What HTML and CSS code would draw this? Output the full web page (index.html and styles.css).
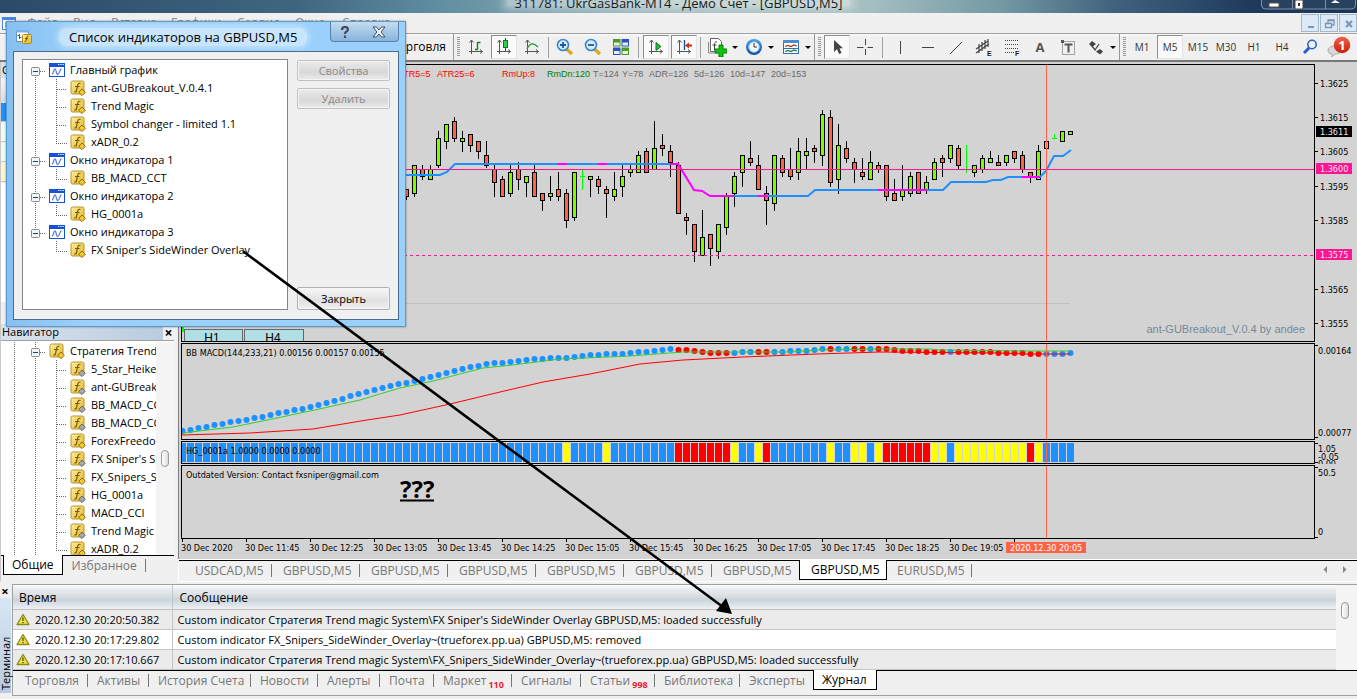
FILE: index.html
```html
<!DOCTYPE html>
<html lang="ru">
<head>
<meta charset="utf-8">
<title>311781: UkrGasBank-MT4 - Демо Счет - [GBPUSD,M5]</title>
<link rel="stylesheet" href="styles.css">
</head>
<body>
<svg class="defs" aria-hidden="true">
  <defs>
    <linearGradient id="gold" x1="0" y1="0" x2="1" y2="1"><stop offset="0" stop-color="#fff0a0"/><stop offset="1" stop-color="#e0b428"/></linearGradient>
    <linearGradient id="clockface" x1="0" y1="0" x2="0" y2="1"><stop offset="0" stop-color="#4aa0f0"/><stop offset="1" stop-color="#0a4f9c"/></linearGradient>
    <linearGradient id="badge" x1="0" y1="0" x2="0" y2="1"><stop offset="0" stop-color="#f4604a"/><stop offset="1" stop-color="#c8200c"/></linearGradient>
  </defs>
  <symbol id="i-func" viewBox="0 0 16 16"><rect x="1" y="1" width="13" height="13" rx="1.500" fill="url(#gold)" stroke="#b8952c"/><path d="M10.500 3.500c-2-.8-2.600.5-3 2.500l-1 4.500c-.3 1.500-1 1.800-2.200 1.300M5 6.500h4.500" fill="none" stroke="#7a5a08" stroke-width="1.200"/><path d="M12 9l3.300 3.300L12 15.600 8.700 12.300z" fill="#f4c830" stroke="#8f6d10"/></symbol>
  <symbol id="i-funcg" viewBox="0 0 16 16"><rect x="1" y="1" width="13" height="13" rx="1.500" fill="url(#gold)" stroke="#b8952c"/><path d="M10.500 3.500c-2-.8-2.600.5-3 2.500l-1 4.500c-.3 1.500-1 1.800-2.200 1.300M5 6.500h4.500" fill="none" stroke="#7a5a08" stroke-width="1.200"/><path d="M12 9l3.300 3.300L12 15.600 8.700 12.300z" fill="#a8a8a8" stroke="#686868"/></symbol>
  <symbol id="i-win" viewBox="0 0 16 16"><rect x=".5" y="1.500" width="15" height="13" fill="#fff" stroke="#1450d8"/><path d="M0 1h16v4H0z" fill="#1450d8"/><path d="M9 2.500h1.300M11.300 2.500h1.300M13.500 2.500h1.300" stroke="#fff" stroke-width="1.200"/><path d="M3 12c1.500 0 1.500-5 3-5s1 5.500 2.800 5.500S10.500 7 12.500 7" fill="none" stroke="#5a80e0" stroke-width="1.300"/></symbol>
  <symbol id="g-vert" viewBox="0 0 21 18"><path d="M10.500 0v18" stroke="#666" stroke-dasharray="1 1"/></symbol>
  <symbol id="g-none" viewBox="0 0 21 18"></symbol>
  <symbol id="g-tee" viewBox="0 0 21 18"><path d="M10.500 0v18M11 10.500h10" stroke="#666" stroke-dasharray="1 1"/></symbol>
  <symbol id="g-end" viewBox="0 0 21 18"><path d="M10.500 0v10M10 10.500h11" stroke="#666" stroke-dasharray="1 1"/></symbol>
  <symbol id="g-first" viewBox="0 0 21 18"><path d="M10.500 14v4M15 10.500h6" stroke="#666" stroke-dasharray="1 1"/><rect x="6.500" y="6.500" width="8" height="8" rx="1" fill="#f4f4f4" stroke="#8a8a8a"/><path d="M8 10.500h5" stroke="#1a3ab0"/></symbol>
  <symbol id="g-box" viewBox="0 0 21 18"><path d="M10.500 0v18M15 10.500h6" stroke="#666" stroke-dasharray="1 1"/><rect x="6.500" y="6.500" width="8" height="8" rx="1" fill="#f4f4f4" stroke="#8a8a8a"/><path d="M8 10.500h5" stroke="#1a3ab0"/></symbol>
  <symbol id="g-last" viewBox="0 0 21 18"><path d="M10.500 0v6M15 10.500h6" stroke="#666" stroke-dasharray="1 1"/><rect x="6.500" y="6.500" width="8" height="8" rx="1" fill="#f4f4f4" stroke="#8a8a8a"/><path d="M8 10.500h5" stroke="#1a3ab0"/></symbol>
  <symbol id="i-warn" viewBox="0 0 14 13"><path d="M7 1.500L13 11.500H1z" fill="#f0e040" stroke="#8a8a20" stroke-width="1.300" stroke-linejoin="round"/><path d="M7 4.500v3.500M7 9v1.300" stroke="#555510" stroke-width="1.300"/></symbol>
  <symbol id="axes" viewBox="0 0 18 18"><path d="M4.500 2v14M2 13.500h13M2.500 4.500l2-2.500 2 2.500M13 11.500l2.500 2-2.500 2" fill="none" stroke="#555"/></symbol>
</svg>

<div class="app">
  <header class="titlebar">
    <h1>311781: UkrGasBank-MT4 - Демо Счет - [GBPUSD,M5]</h1>
    <div class="winctl"><svg width="96" height="10" viewBox="0 0 96 10"><path d="M.5 0v5q0 4 4 4h86q4 0 4-4V0" fill="#27415f" stroke="#7d93aa"/><path d="M31.500 0v9M64.500 0v9" stroke="#7d93aa"/><rect x="8" y="3" width="10" height="4" fill="#fff" stroke="#555"/><path d="M34 0h8v9h-8z" fill="#fff" stroke="#444"/><path d="M37 3h2v3h-2z" fill="#333"/><path d="M70 3l4-3 5 3z" fill="#fff"/></svg></div>
  </header>

  <nav class="menubar">
    <svg class="appicon" width="14" height="14" viewBox="0 0 14 14"><rect x=".5" y="1.500" width="13" height="12" fill="#fff" stroke="#4a86e0"/><path d="M0 1h14v3H0z" fill="#4a86e0"/><path d="M4 6v6M7 5v5M10 7v4" stroke="#3a78c0"/></svg>
    <a href="#">Файл</a><a href="#">Вид</a><a href="#">Вставка</a><a href="#">Графики</a><a href="#">Сервис</a><a href="#">Окно</a><a href="#">Справка</a>
    <div class="mdi">
      <button aria-label="Свернуть"><svg width="17" height="17"><path d="M6 12h6" stroke="#7a96b4" stroke-width="2"/></svg></button>
      <button aria-label="Восстановить"><svg width="17" height="17"><path d="M7 8V5h6v5h-2M4.500 8.500h6v4h-6zM7 5.500h6" fill="none" stroke="#7a96b4" stroke-width="1.300"/></svg></button>
      <button aria-label="Закрыть окно"><svg width="17" height="17"><path d="M6 6l6 6M12 6l-6 6" stroke="#7a96b4" stroke-width="2.200"/></svg></button>
    </div>
  </nav>

  <div class="toolbar">
    <div class="autotrade">Автоторговля</div>
    <i class="grip"></i>
    <button class="tb" aria-label="Бары"><svg width="18" height="18"><use href="#axes"/><path d="M10.500 4v8M10.500 4.500h3M8 11.500h2.500" stroke="#0a8a0a" fill="none" stroke-width="1.400"/></svg></button>
    <button class="tb on" aria-label="Свечи"><svg width="18" height="18"><use href="#axes"/><path d="M10.500 0v13" stroke="#0a6a0a"/><rect x="8.500" y="2.500" width="4" height="7" fill="#2ed050" stroke="#0a7a1a"/></svg></button>
    <button class="tb" aria-label="Линия"><svg width="18" height="18"><use href="#axes"/><path d="M4 11c3-6 6-7 11-2" stroke="#2a9a3a" fill="none" stroke-width="1.300"/></svg></button>
    <i class="sep"></i>
    <button class="tb" aria-label="Увеличить"><svg width="18" height="18"><path d="M10.500 11l5.500 5" stroke="#d8a820" stroke-width="3.400"/><circle cx="7" cy="7" r="5.500" fill="#d4ecfc" stroke="#3a84c8" stroke-width="1.600"/><path d="M4 7h6M7 4v6" stroke="#1a5a9a" stroke-width="1.800"/></svg></button>
    <button class="tb" aria-label="Уменьшить"><svg width="18" height="18"><path d="M10.500 11l5.500 5" stroke="#d8a820" stroke-width="3.400"/><circle cx="7" cy="7" r="5.500" fill="#d4ecfc" stroke="#3a84c8" stroke-width="1.600"/><path d="M4 7h6" stroke="#1a5a9a" stroke-width="1.800"/></svg></button>
    <button class="tb" aria-label="Плитка"><svg width="18" height="18"><path d="M1 1h7.500v7.500H1zM9.500 9.500H17V17H9.500z" fill="#4a9a20"/><path d="M9.500 1H17v7.500H9.500zM1 9.500h7.500V17H1z" fill="#2a50c8"/><path d="M2 4.500h5.500v3H2zM10.500 4.500H16v3h-5.500zM2 13h5.500v3H2zM10.500 13H16v3h-5.500z" fill="#e8f0e8"/></svg></button>
    <i class="sep wide"></i>
    <button class="tb on" aria-label="Автопрокрутка"><svg width="18" height="18"><use href="#axes"/><path d="M9 4.500l5 4-5 4z" fill="#2ab840" stroke="#0a7a1a"/></svg></button>
    <button class="tb on" aria-label="Сдвиг графика"><svg width="18" height="18"><use href="#axes"/><path d="M9.500 2v10" stroke="#1a4a8a" stroke-width="1.300"/><path d="M10 7.500l4-3v2h3v2h-3v2z" fill="#c83010"/></svg></button>
    <i class="sep"></i>
    <button class="tb dd" aria-label="Индикаторы"><svg width="20" height="20"><path d="M3.500 1.500h8l3 3v10h-11z" fill="#fff" stroke="#666"/><path d="M10 5c-2-.6-2.500 1-2.500 3v5M5.500 8h4" stroke="#444" fill="none"/><path d="M1.500 5v11h9" fill="none" stroke="#888"/><path d="M12 8h4v4h4v4h-4v4h-4v-4H8v-4h4z" fill="#12c412" stroke="#0a7a0a"/></svg><b></b></button>
    <button class="tb dd" aria-label="Периоды"><svg width="18" height="18"><circle cx="9" cy="9" r="8" fill="url(#clockface)"/><circle cx="9" cy="9" r="5.300" fill="#f4f8fc" stroke="#8ab8e0"/><path d="M9 5v4h3" stroke="#333" fill="none"/></svg><b></b></button>
    <button class="tb dd" aria-label="Шаблоны"><svg width="18" height="18"><rect x="1.500" y="2.500" width="15" height="13" fill="#fff" stroke="#2a70c0"/><path d="M1 2h16v3H1z" fill="#4a8ed8"/><path d="M3 8.500l3-1 3 1 3-1.500 3 1" stroke="#a03818" fill="none" stroke-width="1.300"/><path d="M1 10.500h16" stroke="#2a70c0"/><path d="M3 13.500l3-1 3 1 3-1.500 3 1" stroke="#1a7a1a" fill="none" stroke-width="1.300"/></svg><b></b></button>
    <i class="grip"></i>
    <button class="tb on" aria-label="Курсор"><svg width="18" height="18"><path d="M6 2v12l3-3 2 5 2.500-1-2-4.700H15z" fill="#444"/></svg></button>
    <button class="tb" aria-label="Перекрестие"><svg width="18" height="18"><path d="M9.500 1v6M9.500 11v6M1 9.500h6.500M11.500 9.500H17" stroke="#444"/></svg></button>
    <i class="sep wide"></i>
    <button class="tb" aria-label="Вертикальная линия"><svg width="18" height="18"><path d="M9.500 3v13" stroke="#444" stroke-width="1"/></svg></button>
    <button class="tb" aria-label="Горизонтальная линия"><svg width="18" height="18"><path d="M3 9.500h12" stroke="#444"/></svg></button>
    <button class="tb" aria-label="Трендовая линия"><svg width="18" height="18"><path d="M3 16L15 4" stroke="#444"/></svg></button>
    <button class="tb" aria-label="Канал"><svg width="18" height="18"><path d="M1 11L13 3M1 15L14 6M4 6v9M7 4v9M10 2v9M13 1v8" stroke="#444" stroke-width="1.200"/><text x="12" y="18" class="tiny">E</text></svg></button>
    <button class="tb" aria-label="Фибоначчи"><svg width="18" height="18"><path d="M2 2.500h14M2 6.500h14M2 10.500h14M2 14.500h9" stroke="#444" stroke-dasharray="1 1"/><text x="12" y="18" class="tiny">F</text></svg></button>
    <button class="tb letter">A</button>
    <button class="tb" aria-label="Текстовая метка"><svg width="18" height="18"><rect x="3.500" y="3.500" width="12" height="13" fill="none" stroke="#555" stroke-dasharray="1 1"/><path d="M5.500 6.500h8M9.500 6.500v8" stroke="#555" stroke-width="2"/><path d="M2 2h3v3H2z" fill="#555"/></svg></button>
    <button class="tb dd" aria-label="Стрелки"><svg width="18" height="18"><path d="M5 3l4 3-4 3-3-3zM13 11l3 2.500-3 3-4-3z" fill="#444"/><path d="M5 8l3 4 4-6" stroke="#444" fill="none" stroke-width="1.300"/></svg><b></b></button>
    <i class="grip"></i>
    <button class="tb">M1</button><button class="tb on">M5</button><button class="tb">M15</button><button class="tb">M30</button><button class="tb">H1</button><button class="tb">H4</button>
    <button class="tb" aria-label="Поиск"><svg width="18" height="18"><path d="M3 15l5-5" stroke="#2a5ac8" stroke-width="3"/><circle cx="11" cy="6.500" r="4.200" fill="#eef4ff" stroke="#2a60d0" stroke-width="1.600"/></svg></button>
    <button class="tb" aria-label="Сообщения: 1"><svg width="26" height="24"><path d="M3 15c0-4 10-6 13-2 1 4-2 6-6 6l-3 3v-3c-3 0-4-2-4-4z" fill="#d8d8dc" stroke="#aaa"/><circle cx="17" cy="10" r="8.300" fill="url(#badge)"/><text x="17" y="15" class="count">1</text></svg></button>
  </div>

  <div class="middle">
    <aside class="side">
      <section class="market">
        <h2>Обзор рынка: GBPUSD</h2>
        <div class="mhead"></div>
        <div class="mrow sel"></div><div class="mrow mint"></div><div class="mrow mint"></div><div class="mrow straw"></div>
        <div class="mrest"></div>
      </section>
      <section class="navigator">
        <header><h2>Навигатор</h2><button aria-label="Закрыть навигатор">×</button></header>
        <div class="navbody">
          <ul class="tree" id="nav-tree"></ul>
          <div class="track"><i></i></div>
        </div>
        <div class="sidetabs"><button class="cur">Общие</button><button>Избранное</button></div>
      </section>
    </aside>

    <main class="chart">
      <div class="panes">
        <svg class="pane" id="p-main"></svg><svg class="axis" id="a-main"></svg>
        <svg class="pane" id="p-macd"></svg><svg class="axis" id="a-macd"></svg>
        <svg class="pane" id="p-hg"></svg><svg class="axis" id="a-hg"></svg>
        <svg class="pane" id="p-fx"></svg><svg class="axis" id="a-fx"></svg>
        <svg class="time" id="a-time"></svg>
      </div>
      <div class="charttabs">
        <button>USDCAD,M5</button><button>GBPUSD,M5</button><button>GBPUSD,M5</button><button>GBPUSD,M5</button><button>GBPUSD,M5</button><button>GBPUSD,M5</button><button class="last">GBPUSD,M5</button><button class="cur">GBPUSD,M5</button><button>EURUSD,M5</button>
        <svg class="scroll" width="30" height="9"><path d="M6 1v7L2.500 4.500zM22 1v7l3.500-3.500z" fill="#888"/></svg>
      </div>
    </main>
  </div>

  <section class="terminal">
    <div class="tstrip"><button aria-label="Закрыть терминал">×</button><span>Терминал</span></div>
    <div class="tmain">
      <div class="logbox">
        <table class="log">
          <thead><tr><th class="when">Время</th><th>Сообщение</th></tr></thead>
          <tbody>
            <tr><td><svg width="14" height="13"><use href="#i-warn"/></svg>2020.12.30 20:20:50.382</td><td>Custom indicator Стратегия Trend magic System\FX Sniper's SideWinder Overlay GBPUSD,M5: loaded successfully</td></tr>
            <tr><td><svg width="14" height="13"><use href="#i-warn"/></svg>2020.12.30 20:17:29.802</td><td>Custom indicator FX_Snipers_SideWinder_Overlay~(trueforex.pp.ua) GBPUSD,M5: removed</td></tr>
            <tr><td><svg width="14" height="13"><use href="#i-warn"/></svg>2020.12.30 20:17:10.667</td><td>Custom indicator Стратегия Trend magic System\FX_Snipers_SideWinder_Overlay~(trueforex.pp.ua) GBPUSD,M5: loaded successfully</td></tr>
          </tbody>
        </table>
        <div class="track"><i></i></div>
      </div>
      <div class="termtabs">
        <button>Торговля</button><button>Активы</button><button>История Счета</button><button>Новости</button><button>Алерты</button><button>Почта</button><button>Маркет<sub>110</sub></button><button>Сигналы</button><button>Статьи<sub>998</sub></button><button>Библиотека</button><button class="last">Эксперты</button><button class="cur">Журнал</button>
      </div>
    </div>
  </section>
</div>

<div class="dialog" role="dialog" aria-labelledby="dlg-title">
  <header>
    <svg width="17" height="16" viewBox="0 0 17 16"><rect x=".5" y="1.500" width="12" height="11" fill="#fff" stroke="#6a94c0"/><path d="M0 1h13v2.500H0z" fill="#7ab0e8"/><path d="M3.500 5v5M1.500 6.500h2M3.500 8.500h2" stroke="#3a60a0"/><rect x="6.500" y="5.500" width="9" height="9" rx="1" fill="url(#gold)" stroke="#b88a10"/><path d="M12.500 7c-1.500-.4-1.500 1-2 3s-.7 3-2 2.600M9 9.500h3" stroke="#6a4c00" fill="none"/></svg>
    <h2 id="dlg-title">Список индикаторов на GBPUSD,M5</h2>
    <div class="dctl"><button aria-label="Справка"><svg width="12" height="12"><path d="M3 4c0-4 6-4 6-.5C9 5.500 6 5.500 6 8M6 9.500V12" fill="none" stroke="#3c4c60" stroke-width="2.200"/></svg></button><button aria-label="Закрыть окно"><svg width="14" height="12"><path d="M1 1h3.500L7 4l2.500-3H13L9 6l4 5H9.500L7 8l-2.500 3H1l4-5z" fill="#eef4fa" stroke="#3c5068"/></svg></button></div>
  </header>
  <div class="dbody">
    <ul class="tree listbox" id="dlg-tree"></ul>
    <div class="dbtns"><button disabled>Свойства</button><button disabled>Удалить</button><button class="close">Закрыть</button></div>
  </div>
</div>

<svg class="arrow" width="500" height="370" viewBox="0 0 500 370" aria-hidden="true"><path d="M3 4L482 359" stroke="#000" stroke-width="2.500" stroke-linecap="round"/><path d="M491 366L475 363 485 350z"/></svg>
<script src="chart.js"></script>
</body>
</html>
```

FILE: styles.css
```css
* { box-sizing: border-box; }
body { margin: 0; font: 11px/18px "Open Sans", "Noto Sans", sans-serif; color: #000; background: #f0f0f0; position: relative; }
h1, h2 { margin: 0; font-weight: 400; font-size: inherit; }
button { font: inherit; color: inherit; border: 0; background: none; padding: 0; margin: 0; }
svg { display: block; flex: none; }
ul { list-style: none; margin: 0; padding: 0; }
.defs { position: absolute; width: 0; height: 0; }
.app { height: 100vh; display: flex; flex-direction: column; overflow: hidden; }

.titlebar { flex: none; height: 13px; overflow: hidden; display: flex; justify-content: center; position: relative; background: linear-gradient(90deg, #2c4a68, #3f6680 22%, #5f8da0 32%, #a2bcbf 50%, #a5bfc1 64%, #7298a2 74%, #41627e 82%, #1f3b5c 92%, #1a3454); }
.titlebar h1 { font-size: 13px; line-height: 6px; color: #1a1a1a; padding: 0 8px; background: rgba(255, 255, 255, .4); box-shadow: 0 0 8px 4px rgba(255, 255, 255, .4); height: 6px; white-space: nowrap; }
.winctl { position: absolute; right: 0; top: 0; }

.menubar { flex: none; height: 20px; display: grid; grid-template-columns: 25px 46px 38px 60px 66px 58px 47px 60px 1fr; align-items: center; padding-left: 2px; color: #8c8c8c; font-size: 12px; }
.menubar a { color: inherit; text-decoration: none; line-height: 16px; }
.mdi { justify-self: end; display: flex; gap: 1px; }
.mdi button { width: 18px; height: 18px; background: #dce9f7; border: 1px solid #a4b8cc; }

.toolbar { flex: none; height: 29px; display: flex; align-items: center; border-top: 1px solid #a0a0a0; border-bottom: 2px solid #787878; background: linear-gradient(#fafafa, #f0f0f0 3px); color: #333; font-size: 10px; }
.autotrade { width: 453px; padding-right: 7px; text-align: right; font-size: 12px; color: #000; }
.grip { width: 9px; height: 26px; border-left: 1px solid #999; background: repeating-linear-gradient(#999 0 1px, transparent 1px 2px) content-box; border-right: 2px solid transparent; flex: none; padding: 3px 0 3px 3px; }
.tb { width: 28px; height: 24px; display: flex; align-items: center; justify-content: center; border: 1px solid transparent; flex: none; }
.tb.on { width: 26px; margin: 0 1px; background: #fafafa; border-color: #8c8c8c #e4e4e4 #e4e4e4 #8c8c8c; }
.tb.dd { width: 37px; gap: 5px; padding-left: 2px; }
.tb.dd b { border: 3px solid transparent; border-top-color: #000; border-bottom: 0; }
.tb.letter { font-size: 13px; font-weight: 700; color: #555; }
.sep { width: 1px; height: 21px; background: #a0a0a0; margin: 0 2px; flex: none; }
.sep.wide { margin: 0 3px; }
.tiny { font: 700 7px "Liberation Sans", sans-serif; fill: #222; }
.count { font: 700 13px "Open Sans", sans-serif; fill: #fff; text-anchor: middle; }

.middle { flex: 1; min-height: 0; display: flex; }
.side { width: 178px; flex: none; display: flex; flex-direction: column; padding-right: 4px; border-left: 1px solid #c8c8c8; }
.market { height: 262px; flex: none; display: flex; flex-direction: column; }
.market h2, .navigator header { height: 16px; line-height: 15px; background: linear-gradient(90deg, #d8e2ee, #b8cade); padding-left: 1px; }
.mhead { height: 22px; margin-top: 3px; background: linear-gradient(#f4f4f4, #d4dade); overflow: hidden; }
.mrow { height: 19px; border-bottom: 1px solid #c8c8c8; background: #eefcf0; margin-bottom: 1px; }
.mrow.sel { background: #1e90ff; }
.mrow.straw { background: #fdf6c8; }
.mrest { flex: 1; background: #fff; border-bottom: 22px solid #f0f0f0; }
.navigator { flex: 1; min-height: 0; display: flex; flex-direction: column; }
.navigator header { display: flex; justify-content: space-between; flex: none; }
.navigator header button { width: 11px; font-size: 14px; font-weight: 700; line-height: 15px; background: #f0f0f0; }
.navbody { flex: 1; min-height: 0; display: flex; overflow: hidden; background: #fff; border-top: 1px solid #a0a0a0; padding: 1px 0 0 3px; }
.navbody .tree { width: 152px; overflow: hidden; flex: none; }
.track { flex: 1; background: #f4f4f4; display: flex; justify-content: center; }
.track i { width: 8px; height: 17px; border: 1px solid #9a9a9a; border-radius: 4px; background: linear-gradient(90deg, #fff, #ddd); }
.navbody .track { padding-top: 108px; }
.sidetabs { flex: none; height: 26px; display: flex; align-items: flex-start; border-top: 1px solid #000; font-size: 12px; line-height: 19px; color: #777; padding-left: 2px; }
.sidetabs button { padding: 0 9px; position: relative; }
.sidetabs button:last-child::after, .charttabs button::after, .termtabs button::after { content: ""; position: absolute; right: 0; top: 3px; bottom: 3px; width: 1px; background: #777; }
.charttabs button::after { right: -1px; }
.sidetabs .cur { color: #000; background: #fff; border: 1px solid #000; border-top: 0; margin-top: -1px; padding: 0 8px; }

.tree li { display: flex; align-items: center; height: 18px; white-space: nowrap; }
.tree .ico { margin: 0 5px 0 3px; }

.chart { flex: 1; min-width: 0; display: flex; flex-direction: column; background: #d3d3d3; border-left: 1px solid #808080; padding-top: 2px; }
.panes { flex: 1; min-height: 0; display: grid; grid-template-columns: 1fr 42px; grid-template-rows: 1fr 97px 23px 74px 20px; row-gap: 1px; padding-left: 2px; overflow: hidden; }
.panes svg { width: 100%; height: 100%; min-height: 0; overflow: hidden; }
.panes .pane { border: 1px solid #000; }
.panes .time { grid-column: 1 / 3; overflow: visible; }
.t9 { font: 9px "DejaVu Sans Condensed", "DejaVu Sans", sans-serif; }
.atr { font: 9px "Liberation Sans", sans-serif; }
.mark { font: 11px "Liberation Sans", sans-serif; fill: #778899; text-anchor: end; }
.tf { font: 12px "Liberation Sans", sans-serif; text-anchor: middle; }
.quest { font: 700 24px "Open Sans", sans-serif; }

.charttabs { flex: none; height: 21px; display: flex; border-top: 1px solid #000; outline: 1px solid #fff; background: #f0f0f0; font-size: 12px; line-height: 19px; color: #777; padding-left: 4px; }
.charttabs button { width: 88px; height: 19px; position: relative; padding-left: 12px; text-align: left; flex: none; }
.charttabs .last::after, .sidetabs .cur::after, .charttabs .cur::after, .termtabs .cur::after, .termtabs .last::after { display: none; }
.charttabs .cur { color: #000; background: #fff; border: 1px solid #000; border-top: 0; height: 20px; margin-top: -1px; padding-left: 11px; line-height: 20px; }
.charttabs .cur + button { padding-left: 10px; width: 84px; }
.scroll { margin: 4px 6px 0 auto; }

.terminal { flex: none; height: 118px; display: flex; padding-top: 3px; border-bottom: 3px solid #f0f0f0; }
.tstrip { width: 12px; display: flex; flex-direction: column; flex: none; }
.tstrip button { height: 14px; line-height: 14px; font-size: 13px; font-weight: 700; margin-right: 2px; }
.tstrip span { flex: 1; margin-bottom: 3px; writing-mode: vertical-rl; transform: rotate(180deg); line-height: 11px; background: linear-gradient(#b8cade, #d8e6f4); padding-top: 3px; width: 11px; font-size: 11px; }
.tmain { flex: 1; min-width: 0; border-top: 1px solid #a0a0a0; border-left: 1px solid #a0a0a0; border-bottom: 1px solid #a0a0a0; }
.logbox { display: flex; border-bottom: 1px solid #000; }
.log { flex: 1; border-collapse: collapse; table-layout: fixed; width: 100px; line-height: 19px; }
.log th { text-align: left; font-weight: 400; height: 24px; padding: 1px 0 0 7px; background: linear-gradient(#fff, #f0f2f4 10%, #d2d8dc 55%, #c8d4dc 62%, #eef0f2); font-size: 12px; border-left: 1px solid #c0c8d0; border-bottom: 1px solid #c0c0c0; }
.log .when { width: 159px; border-left: 0; padding-left: 6px; }
.log td { height: 20px; padding: 0 0 0 5px; border-bottom: 1px solid #c4c4c4; white-space: nowrap; overflow: hidden; background: #fff; }
.log tr:nth-child(odd) td { background: #ebebeb; }
.log td:first-child { border-right: 1px solid #c4c4c4; padding-left: 3px; }
.log td svg { display: inline-block; vertical-align: -2px; margin-right: 5px; }
.logbox .track { flex: 0 0 21px; padding-top: 17px; padding-right: 4px; }
.termtabs { display: grid; grid-template-columns: 75px 61px 102px 67px 62px 54px 78px 69px 74px 85px 73px 64px 1fr; justify-content: start; font-size: 12px; line-height: 19px; height: 25px; align-items: start; color: #777; }
.termtabs button { position: relative; text-align: left; padding-left: 9px; white-space: nowrap; }
.termtabs button:first-child { padding-left: 12px; }
.termtabs .cur { color: #000; background: #fff; border: 1px solid #000; border-top: 0; margin-top: -1px; padding-left: 8px; }
.termtabs sub { color: #e8202c; font-size: 9px; font-weight: 700; line-height: 8px; vertical-align: -3px; margin-left: 2px; }

.dialog { position: absolute; left: 6px; top: 21px; width: 400px; height: 306px; display: flex; flex-direction: column; background: linear-gradient(90deg, #86c0f0, #9cd0fa 20%, #9ad0fc); border: 1px solid #5a9ad0; padding: 0 6px 6px; box-shadow: 0 0 2px rgba(0, 0, 0, .4); }
.dialog header { height: 29px; display: flex; align-items: center; padding-left: 3px; flex: none; }
.dialog header h2 { font-size: 13px; margin-left: 26px; padding: 0 10px; line-height: 18px; background: rgba(255, 255, 255, .45); border-radius: 8px; box-shadow: 0 0 6px 2px rgba(255, 255, 255, .4); white-space: nowrap; }
.dctl { margin-left: auto; align-self: flex-start; display: flex; width: 69px; height: 20px; border: 1px solid #5a82a8; border-top: 0; border-radius: 0 0 4px 4px; background: linear-gradient(#c4dcf0, #88b4dc); }
.dctl button { flex: 1 0 24px; display: flex; align-items: center; justify-content: center; }
.dctl button + button { flex-grow: 3; }
.dbody { flex: 1; display: flex; border: 1px solid #4a6a88; background: #f0f0f0; padding: 7px 8px 9px; gap: 9px; }
.listbox { flex: 1; background: #fff; border: 1px solid #828790; padding: 1px 2px; }
.dbtns { width: 93px; display: flex; flex-direction: column; gap: 7px; padding-top: 1px; }
.dbtns button { height: 21px; border: 1px solid #c0c0c0; border-radius: 2px; background: linear-gradient(#eaeaea, #d8d8d8 60%, #ececec); color: #8a8a8a; box-shadow: inset 0 0 0 1px #f4f4f4; }
.dbtns .close { margin-top: auto; height: 23px; color: #000; border-color: #b0b0b0; background: linear-gradient(#f8f8f8, #e0e0e0 60%, #f0f0f0); }
.arrow { position: absolute; left: 241px; top: 248px; pointer-events: none; }
```

FILE: chart.js
```js
// Trees
const use = (id, w, h, c) => `<svg class="${c || ''}" width="${w}" height="${h}"><use href="#${id}"/></svg>`;
const row = (guides, icon, text) =>
  `<li>${guides.map(g => use(g, 21, 18)).join('')}${use(icon, 16, 16, 'ico')}<span>${text}</span></li>`;

document.getElementById('dlg-tree').innerHTML = [
  row(['g-first'], 'i-win', 'Главный график'),
  row(['g-vert', 'g-tee'], 'i-func', 'ant-GUBreakout_V.0.4.1'),
  row(['g-vert', 'g-tee'], 'i-func', 'Trend Magic'),
  row(['g-vert', 'g-tee'], 'i-func', 'Symbol changer - limited 1.1'),
  row(['g-vert', 'g-end'], 'i-func', 'xADR_0.2'),
  row(['g-box'], 'i-win', 'Окно индикатора 1'),
  row(['g-vert', 'g-end'], 'i-func', 'BB_MACD_CCT'),
  row(['g-box'], 'i-win', 'Окно индикатора 2'),
  row(['g-vert', 'g-end'], 'i-func', 'HG_0001a'),
  row(['g-last'], 'i-win', 'Окно индикатора 3'),
  row(['g-none', 'g-end'], 'i-func', "FX Sniper's SideWinder Overlay")
].join('');

const items = [['5_Star_Heiken', 0], ['ant-GUBreakout', 0], ['BB_MACD_CCT', 0], ['BB_MACD_CCT2', 0], ['ForexFreedom', 1],
  ["FX Sniper's Side", 0], ['FX_Snipers_Side', 1], ['HG_0001a', 0], ['MACD_CCI', 1], ['Trend Magic', 0], ['xADR_0.2', 1]];
document.getElementById('nav-tree').innerHTML =
  row(['g-vert', 'g-box'], 'i-func', 'Стратегия Trend magic') +
  items.map(([t, gold], i) => row(['g-vert', 'g-vert', i === items.length - 1 ? 'g-end' : 'g-tee'], gold ? 'i-func' : 'i-funcg', t)).join('');

// Chart: x and y are window coordinates, shifted into each pane
const put = (id, dx, dy, body, fixed) => {
  document.getElementById(id).innerHTML = `<g transform="translate(${-dx},${-dy})">${body}</g>${fixed || ''}`;
};
const line = (pts, color, w) => `<polyline points="${pts}" fill="none" stroke="${color}" stroke-width="${w}"/>`;
const cross = '<path d="M864.5 0v300" stroke="#ff6347"/>';

// [bodyTop, bodyBottom, wickTop, wickBottom, direction]; 8px per bar from x=406
const bars = [
  [189,197,189,200,0],[165,194,165,197,1],[169,177,165,180,0],[169,180,165,180,1],[138,166,131,168,1],[124,142,124,149,1],
  [121,139,117,142,0],[138,142,131,152,1],[134,146,134,152,0],[141,152,141,159,0],[155,166,141,168,0],[169,183,165,197,0],
  [179,197,176,197,0],[172,194,165,197,1],[169,180,162,190,0],[176,183,176,197,1],[172,197,165,197,0],[193,201,193,211,0],
  [193,197,176,201,1],[189,197,172,201,0],[193,221,189,228,0],[172,218,172,221,1],[176,176,170,190,2],[176,180,176,197,1],
  [179,187,176,194,0],[189,194,186,218,0],[189,197,172,201,1],[176,187,165,197,1],[169,173,165,177,1],[155,173,151,173,1],
  [151,173,148,173,0],[148,170,121,170,1],[145,149,134,156,0],[151,163,145,177,0],[165,214,162,214,0],[217,221,213,235,0],
  [224,252,224,262,0],[237,256,210,256,1],[234,249,234,266,0],[224,252,224,259,1],[196,228,193,235,1],[176,194,172,207,1],
  [155,173,155,187,1],[158,163,141,166,0],[165,190,155,190,0],[193,201,186,225,0],[155,204,155,211,1],[158,173,155,177,0],
  [169,177,148,180,0],[151,173,138,180,1],[151,156,138,169,1],[148,152,145,163,0],[114,156,110,166,1],[117,183,110,187,0],
  [145,180,124,194,1],[148,159,141,163,0],[162,170,158,183,0],[172,177,158,180,0],[162,180,151,180,1],[165,170,162,173,0],
  [165,197,165,201,0],[193,201,179,201,0],[189,197,165,201,1],[176,194,172,197,1],[172,194,172,194,0],[182,190,176,194,1],
  [162,180,158,180,1],[158,163,155,177,0],[145,159,145,163,1],[148,166,145,169,0],[145,145,145,173,3],[165,173,165,177,1],
  [158,170,155,173,1],[158,163,151,163,1],[162,166,155,166,0],[155,163,155,166,1],[151,159,151,163,0],[155,170,151,173,0],
  [172,177,172,183,0],[151,180,145,180,1],[141,149,141,149,1],[138,138,134,138,2],[131,142,131,142,1],[131,135,131,135,1]
];
const candles = bars.map(([t, b, wt, wb, d], i) => {
  const x = 406.5 + 8 * i;
  if (d > 1) return `<path d="M${x} ${wt}V${wb}${d === 2 ? `M${x - 2.5} ${t + .5}h5` : ''}" stroke="#0f0"/>`;
  return `<path d="M${x} ${wt}V${wb}" stroke="#000"/><rect x="${x - 2}" y="${t + .5}" width="4" height="${b - t - 1}" fill="${d ? '#7cfc00' : '#ff6347'}" stroke="#000"/>`;
}).join('');

const blue = '#1e90ff', pink = '#f0f';
const ma = [
  ['406,175 440,175 447,172 455,164 670,164', blue], ['558,164 567,164', pink], ['598,164 607,164', pink],
  ['670,164 678,164 694,190 702,191 710,196 734,196', pink], ['734,196 808,196 815,190 943,190 951,182 986,182 993,180 1001,180 1008,177 1040,177 1046,171 1054,156 1063,156 1071,150', blue],
  ['758,196 767,196', pink], ['878,190 927,190', pink], ['1022,177 1040,177', pink]
].map(([p, c]) => line(p, c, 2)).join('');
const stats = [[398,'ATR5=5','#f00'],[437,'ATR25=6','#f00'],[502,'RmUp:8','#f00'],[547,'RmDn:120','#008000'],[593,'T=124','#696969'],
  [622,'Y=78','#696969'],[649,'ADR=126','#696969'],[694,'5d=126','#696969'],[730,'10d=147','#696969'],[771,'20d=153','#696969']]
  .map(([x, t, c]) => `<text class="atr" x="${x}" y="77" fill="${c}">${t}</text>`).join('');
put('p-main', 182, 65, `<path d="M406 303.5H1070" stroke="#c0c0c0"/>${candles}${ma}${stats}
  <path d="M182 326h2v6h-2z" fill="#0f0"/>
  <rect x="184.5" y="329.500" width="58" height="20" fill="#b0e0e6" stroke="#666"/><rect x="244.500" y="329.500" width="59" height="20" fill="#b0e0e6" stroke="#666"/>
  <text class="tf" x="212" y="342">H1</text><text class="tf" x="273" y="342">H4</text>`,
  `<path d="M0 104.500h3000" stroke="#ff1493"/><path d="M0 190.500h3000" stroke="#ff1493" stroke-dasharray="3 3"/>${cross}
  <text class="mark" x="100%" dx="-9" y="268">ant-GUBreakout_V.0.4 by andee</text>`);
const ticks = [[83,'1.3625'],[117,'1.3615'],[151,'1.3605'],[186,'1.3595'],[220,'1.3585'],[289,'1.3565'],[323,'1.3555']]
  .map(([y, t]) => `<path d="M1315 ${y + .5}h3" stroke="#000"/><text class="t9" x="1320" y="${y + 4}">${t}</text>`).join('');
const tags = [[126,'1.3611','#000'],[163,'1.3600','#ff1493'],[249,'1.3575','#ff1493']]
  .map(([y, t, c]) => `<rect x="1316" y="${y}" width="36" height="11" fill="${c}"/><text class="t9" x="1320" y="${y + 9}" fill="#f4e8f0">${t}</text>`).join('');
put('a-main', 1315, 64, ticks + tags);

// BB MACD: 8px per point from x=182
const macd = [431,430,428,427,425,424,422,421,420,418,417,415,413,412,410,409,407,405,403,401,399,396,394,392,390,388,386,384,
  383,381,379,377,375,373,371,369,367,366,364,363,363,362,361,360,359,359,358,358,358,357,356,355,355,354,354,354,353,352,352,351,350,349,
  350,350,351,352,353,353,353,353,352,352,352,352,352,352,351,351,351,350,349,349,349,349,349,349,349,349,349,350,351,351,351,352,352,352,352,
  352,352,352,352,352,353,353,353,353,354,354,354,354,354,353];
const isRed = i => (i > 61 && i < 69) || [72, 73, 81, 84, 85].includes(i) || (i > 86 && i < 108 && i !== 96);
const dots = macd.map((y, i) => `<circle cx="${182.5 + 8 * i}" cy="${y}" r="3" fill="${isRed(i) ? '#f00' : blue}"/>`).join('');
put('p-macd', 182, 344, dots +
  line('182,433 233,427 277,418 310,411 360,400 400,388 433,381 483,368 513,365 560,359 630,356 683,352 790,352 817,350 880,349 930,349 940,350 1025,351 1070,351', '#32cd32', 1) +
  line('182,435 250,433 313,429 367,420 400,415 450,404 500,392 543,382 590,374 640,364 683,360 743,357 817,354 880,352 997,353 1027,354 1070,354', '#f00', 1) +
  '<text class="t9" x="186" y="356">BB MACD(144,233,21) 0.00156 0.00157 0.00155</text>', cross);
put('a-macd', 1315, 343, '<path d="M1315 345.500h3M1315 437.500h3" stroke="#000"/><text class="t9" x="1318" y="354">0.00164</text><text class="t9" x="1318" y="436">0.00077</text>');

// HG histogram
const runs = 'b48y1b4y1b8r7y1b2y1r1b7y1b2y2b1y1r6y2b1y9r1y1b4';
let n = 0, hist = '';
for (const [, c, k] of runs.matchAll(/([bry])(\d+)/g))
  for (let j = 0; j < +k; j++, n++)
    hist += `<rect x="${179 + 8 * n}" y="443" width="7" height="19" fill="${{ b: blue, r: '#f00', y: '#ff0' }[c]}"/>`;
put('p-hg', 182, 442, hist + '<text class="t9" x="186" y="454">HG_0001a 1.0000 0.0000 0.0000</text>', cross);
put('a-hg', 1315, 441, '<path d="M1315 443.500h3M1315 462.500h3" stroke="#000"/><text class="t9" x="1318" y="452">1.05</text><text class="t9" x="1318" y="460">-0.05</text><text class="t9" x="1318" y="467">0.00</text>');

put('p-fx', 182, 466, '<text class="t9" x="186" y="478">Outdated Version: Contact fxsniper@gmail.com</text><text class="quest" x="400" y="498">???</text><path d="M400 500.500h34" stroke="#000" stroke-width="2"/>', cross);
put('a-fx', 1315, 465, '<path d="M1315 467.500h3M1315 537.500h3" stroke="#000"/><text class="t9" x="1318" y="476">50.5</text><text class="t9" x="1318" y="535">0</text>');

const times = ['30 Dec 2020','30 Dec 11:45','30 Dec 12:25','30 Dec 13:05','30 Dec 13:45','30 Dec 14:25','30 Dec 15:05','30 Dec 15:45','30 Dec 16:25','30 Dec 17:05','30 Dec 17:45','30 Dec 18:25','30 Dec 19:05'];
put('a-time', 181, 540, times.map((t, i) => `<path d="M${182.5 + 64 * i} 539v3" stroke="#000"/><text class="t9" x="${181 + 64 * i}" y="551">${t}</text>`).join('') +
  '<path d="M1014.500 539v3" stroke="#000"/><rect x="1006" y="542" width="80" height="11" fill="#ff6347"/><text class="t9" x="1010" y="551" fill="#fff">2020.12.30 20:05</text>');
```
